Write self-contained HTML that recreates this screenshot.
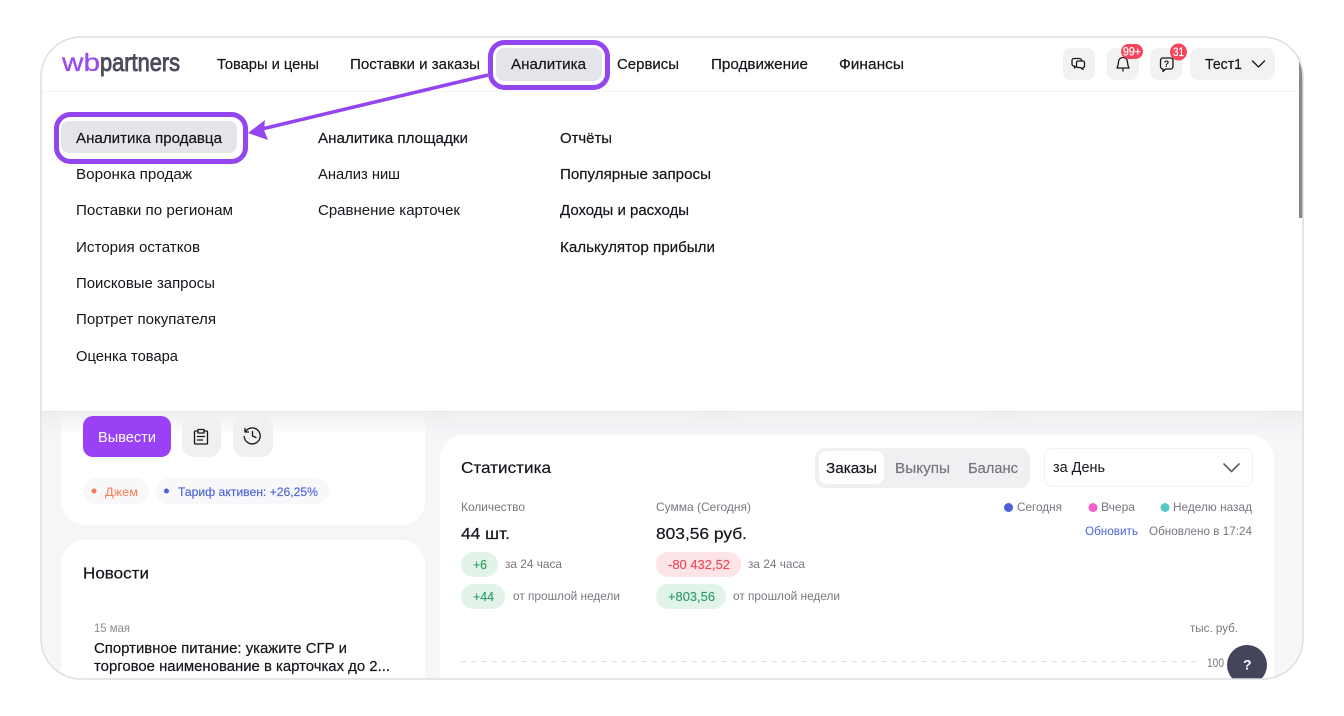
<!DOCTYPE html>
<html lang="ru"><head><meta charset="utf-8"><title>wbpartners</title>
<style>
html,body{margin:0;padding:0;background:#fff;width:1344px;height:716px;overflow:hidden}
svg{display:block}
text{font-family:"Liberation Sans",sans-serif;font-size:15px;fill:#15151c}
.m{stroke:#15151c;stroke-width:.2}
.g{fill:#77777f;font-size:12px}
.ic{fill:none;stroke:#15151c;stroke-width:1.3;stroke-linecap:round;stroke-linejoin:round}
</style></head><body>
<svg width="1344" height="716" viewBox="0 0 1344 716" xmlns="http://www.w3.org/2000/svg">
<defs>
<clipPath id="f"><rect x="41" y="37" width="1262" height="642" rx="40"/></clipPath>
<linearGradient id="sh" x1="0" y1="0" x2="0" y2="1"><stop offset="0" stop-color="#ededf0"/><stop offset="1" stop-color="#ededf0" stop-opacity="0"/></linearGradient>
</defs>
<g clip-path="url(#f)">
<rect x="41" y="37" width="1262" height="642" fill="#f6f6f9"/>
<rect x="61" y="380" width="364" height="145" rx="24" fill="#fff"/>
<rect x="61" y="540" width="364" height="200" rx="24" fill="#fff"/>
<rect x="442" y="380" width="264" height="40" rx="20" fill="#fff"/>
<rect x="728" y="380" width="264" height="40" rx="20" fill="#fff"/>
<rect x="1012" y="380" width="262" height="40" rx="20" fill="#fff"/>
<rect x="440" y="435" width="834" height="300" rx="24" fill="#fff"/>
<rect x="41" y="411" width="1262" height="24" fill="url(#sh)"/>
<rect x="41" y="37" width="1262" height="374" fill="#fff"/>
<rect x="41" y="411" width="1262" height="1" fill="#e8e8eb"/>
<rect x="41" y="91" width="1258" height="1" fill="#f3f3f5"/>
<rect x="1299" y="58" width="4" height="160" fill="#8a8a8d"/>

<!-- logo -->
<text x="62" y="71" textLength="38" lengthAdjust="spacingAndGlyphs" style="font-size:25px;fill:#9a4cf0;stroke:#9a4cf0;stroke-width:.3">wb</text>
<text x="100" y="71" textLength="80" lengthAdjust="spacingAndGlyphs" style="font-size:25px;fill:#4c4c5c;stroke:#4c4c5c;stroke-width:.9">partners</text>

<!-- nav -->
<rect x="496" y="48" width="106" height="33" rx="8" fill="#e4e5ea"/>
<text class="m" x="217" y="69" textLength="102" lengthAdjust="spacingAndGlyphs">Товары и цены</text>
<text class="m" x="350" y="69" textLength="130" lengthAdjust="spacingAndGlyphs">Поставки и заказы</text>
<text class="m" x="511" y="69" textLength="75" lengthAdjust="spacingAndGlyphs">Аналитика</text>
<text class="m" x="617" y="69" textLength="62" lengthAdjust="spacingAndGlyphs">Сервисы</text>
<text class="m" x="711" y="69" textLength="97" lengthAdjust="spacingAndGlyphs">Продвижение</text>
<text class="m" x="839" y="69" textLength="65" lengthAdjust="spacingAndGlyphs">Финансы</text>

<!-- top right -->
<rect x="1063" y="48" width="32" height="32" rx="8" fill="#f2f2f3"/>
<rect x="1107" y="48" width="32" height="32" rx="8" fill="#f2f2f3"/>
<rect x="1150" y="48" width="32" height="32" rx="8" fill="#f2f2f3"/>
<rect x="1190" y="48" width="85" height="32" rx="8" fill="#f2f2f3"/>
<path class="ic" d="M1081.500 61v-.5a2 2 0 0 0-2-2h-5.500a2 2 0 0 0-2 2v3.500a2 2 0 0 0 2 2h.5v2l2-1.800"/>
<path class="ic" d="M1078 61h5a1.500 1.500 0 0 1 1.500 1.500v3.500a1.500 1.500 0 0 1-1.500 1.500v2l-2.500-2h-2.500a1.500 1.500 0 0 1-1.500-1.500v-3.500a1.500 1.500 0 0 1 1.500-1.500z"/>
<path class="ic" d="M1118.500 62a4.500 4.500 0 0 1 9 0c.1 2.500.6 4.300 1.500 6h-12c.9-1.700 1.400-3.500 1.500-6zM1123 68.500v2.500"/>
<path class="ic" d="M1162 58h8.500a2.500 2.500 0 0 1 2.500 2.500v6a2.500 2.500 0 0 1-2.500 2.500h-5l-2.500 2.500v-2.500a2.500 2.500 0 0 1-2.500-2.500v-6a2.500 2.500 0 0 1 2.500-2.500z"/>
<text x="1163.800" y="67" style="font-size:9px;font-weight:bold">?</text>
<rect x="1121" y="44" width="22" height="15" rx="7.500" fill="#f5455c"/>
<text x="1123" y="55.500" textLength="18" lengthAdjust="spacingAndGlyphs" style="font-size:11.500px;fill:#fff;stroke:#fff;stroke-width:.2">99+</text>
<circle cx="1178.500" cy="52" r="8.500" fill="#f5455c"/>
<text x="1173" y="56" textLength="11" lengthAdjust="spacingAndGlyphs" style="font-size:11.500px;fill:#fff;stroke:#fff;stroke-width:.2">31</text>
<text class="m" x="1205" y="69" textLength="37" lengthAdjust="spacingAndGlyphs">Тест1</text>
<path class="ic" stroke-width="1.600" d="M1252.500 61l6 6 6-6"/>

<!-- dropdown -->
<rect x="61" y="121" width="176" height="32" rx="8" fill="#e4e5ea"/>
<text class="m" x="76" y="143" textLength="146" lengthAdjust="spacingAndGlyphs">Аналитика продавца</text>
<text x="76" y="179" textLength="116" lengthAdjust="spacingAndGlyphs">Воронка продаж</text>
<text x="76" y="215" textLength="157" lengthAdjust="spacingAndGlyphs">Поставки по регионам</text>
<text x="76" y="252" textLength="124" lengthAdjust="spacingAndGlyphs">История остатков</text>
<text x="76" y="288" textLength="139" lengthAdjust="spacingAndGlyphs">Поисковые запросы</text>
<text x="76" y="324" textLength="140" lengthAdjust="spacingAndGlyphs">Портрет покупателя</text>
<text x="76" y="361" textLength="102" lengthAdjust="spacingAndGlyphs">Оценка товара</text>
<text class="m" x="318" y="143" textLength="150" lengthAdjust="spacingAndGlyphs">Аналитика площадки</text>
<text x="318" y="179" textLength="82" lengthAdjust="spacingAndGlyphs">Анализ ниш</text>
<text x="318" y="215" textLength="142" lengthAdjust="spacingAndGlyphs">Сравнение карточек</text>
<text class="m" x="560" y="143" textLength="52" lengthAdjust="spacingAndGlyphs">Отчёты</text>
<text class="m" x="560" y="179" textLength="151" lengthAdjust="spacingAndGlyphs">Популярные запросы</text>
<text class="m" x="560" y="215" textLength="129" lengthAdjust="spacingAndGlyphs">Доходы и расходы</text>
<text class="m" x="560" y="252" textLength="155" lengthAdjust="spacingAndGlyphs">Калькулятор прибыли</text>

<!-- left card content -->
<rect x="83" y="416" width="88" height="41" rx="10" fill="#9a40f5"/>
<text x="98" y="442" textLength="58" lengthAdjust="spacingAndGlyphs" style="fill:#fff">Вывести</text>
<rect x="182" y="416" width="39" height="41" rx="12" fill="#f0f0f1"/>
<rect x="233" y="416" width="40" height="41" rx="12" fill="#f0f0f1"/>
<path class="ic" stroke-width="1.700" d="M198 431h-2.500a1 1 0 0 0-1 1v11a1 1 0 0 0 1 1h11a1 1 0 0 0 1-1v-11a1 1 0 0 0-1-1H204M198 429.500h6v3.500h-6zM197.500 436.500h7M197.500 440h5"/>
<path class="ic" stroke-width="1.700" d="M245.500 431.500a8 8 0 1 1-1.300 5M245 428.500v3.500h3.500M252.500 431.500v4.500l3.500 1.500"/>
<rect x="83" y="478" width="66" height="26" rx="13" fill="#f8f8fa"/>
<circle cx="94" cy="491" r="2.500" fill="#f47c4c"/>
<text x="105" y="496" textLength="33" lengthAdjust="spacingAndGlyphs" style="font-size:12px;fill:#f47c4c">Джем</text>
<rect x="156" y="478" width="173" height="26" rx="13" fill="#f8f8fa"/>
<circle cx="166.500" cy="491" r="2.500" fill="#4d63d8"/>
<text x="178" y="496" textLength="140" lengthAdjust="spacingAndGlyphs" style="font-size:12px;fill:#4d63d8;stroke:#4d63d8;stroke-width:.15">Тариф активен: +26,25%</text>
<text class="m" x="83" y="578.500" textLength="66" lengthAdjust="spacingAndGlyphs" style="font-size:16px">Новости</text>
<text x="94" y="632" textLength="36" lengthAdjust="spacingAndGlyphs" style="font-size:11.500px;fill:#8b8b92">15 мая</text>
<text class="m" x="94" y="653" textLength="253" lengthAdjust="spacingAndGlyphs">Спортивное питание: укажите СГР и</text>
<text class="m" x="94" y="671" textLength="296" lengthAdjust="spacingAndGlyphs">торговое наименование в карточках до 2...</text>

<!-- stats -->
<text class="m" x="461" y="473" textLength="90" lengthAdjust="spacingAndGlyphs" style="font-size:16px">Статистика</text>
<rect x="815" y="448" width="215" height="40" rx="10" fill="#f0f0f3"/>
<rect x="819" y="451" width="65" height="33" rx="8" fill="#fff"/>
<text class="m" x="826" y="473" textLength="51" lengthAdjust="spacingAndGlyphs">Заказы</text>
<text x="895" y="473" textLength="55" lengthAdjust="spacingAndGlyphs" style="fill:#77777f;stroke:#77777f;stroke-width:.2">Выкупы</text>
<text x="968" y="473" textLength="50" lengthAdjust="spacingAndGlyphs" style="fill:#77777f;stroke:#77777f;stroke-width:.2">Баланс</text>
<rect x="1044.500" y="448.500" width="208" height="38" rx="8" fill="#fff" stroke="#f0f0f2"/>
<text x="1053" y="472" textLength="52" lengthAdjust="spacingAndGlyphs">за День</text>
<path d="M1224 464l7.500 7.500 7.500-7.500" fill="none" stroke="#5f5f6a" stroke-width="1.600" stroke-linecap="round" stroke-linejoin="round"/>

<text class="g" x="461" y="511" textLength="64" lengthAdjust="spacingAndGlyphs">Количество</text>
<text class="g" x="656" y="511" textLength="95" lengthAdjust="spacingAndGlyphs">Сумма (Сегодня)</text>
<text class="m" x="461" y="539" textLength="49" lengthAdjust="spacingAndGlyphs" style="font-size:16px">44 шт.</text>
<text class="m" x="656" y="539" textLength="91" lengthAdjust="spacingAndGlyphs" style="font-size:16px">803,56 руб.</text>

<rect x="461" y="552" width="37" height="25" rx="12.500" fill="#e2f3ea"/>
<text x="473" y="569" textLength="14" lengthAdjust="spacingAndGlyphs" style="font-size:13px;fill:#2f9e64;stroke:#2f9e64;stroke-width:.15">+6</text>
<text class="g" x="505" y="568" textLength="57" lengthAdjust="spacingAndGlyphs">за 24 часа</text>
<rect x="461" y="584" width="44" height="25" rx="12.500" fill="#e2f3ea"/>
<text x="473" y="601" textLength="21" lengthAdjust="spacingAndGlyphs" style="font-size:13px;fill:#2f9e64;stroke:#2f9e64;stroke-width:.15">+44</text>
<text class="g" x="513" y="600" textLength="107" lengthAdjust="spacingAndGlyphs">от прошлой недели</text>
<rect x="656" y="552" width="85" height="25" rx="12.500" fill="#fde4e7"/>
<text x="668" y="569" textLength="62" lengthAdjust="spacingAndGlyphs" style="font-size:13px;fill:#f0475c;stroke:#f0475c;stroke-width:.15">-80 432,52</text>
<text class="g" x="748" y="568" textLength="57" lengthAdjust="spacingAndGlyphs">за 24 часа</text>
<rect x="656" y="584" width="70" height="25" rx="12.500" fill="#e2f3ea"/>
<text x="668" y="601" textLength="47" lengthAdjust="spacingAndGlyphs" style="font-size:13px;fill:#2f9e64;stroke:#2f9e64;stroke-width:.15">+803,56</text>
<text class="g" x="733" y="600" textLength="107" lengthAdjust="spacingAndGlyphs">от прошлой недели</text>

<circle cx="1008.500" cy="507.500" r="4.500" fill="#4d5fd8"/>
<text class="g" x="1017" y="511" textLength="45" lengthAdjust="spacingAndGlyphs">Сегодня</text>
<circle cx="1093" cy="507.500" r="4.500" fill="#f45fc8"/>
<text class="g" x="1101" y="511" textLength="34" lengthAdjust="spacingAndGlyphs">Вчера</text>
<circle cx="1165" cy="507.500" r="4.500" fill="#55c8c8"/>
<text class="g" x="1173" y="511" textLength="79" lengthAdjust="spacingAndGlyphs">Неделю назад</text>
<text x="1085" y="535" textLength="53" lengthAdjust="spacingAndGlyphs" style="font-size:12px;fill:#4d63d8">Обновить</text>
<text class="g" x="1149" y="535" textLength="103" lengthAdjust="spacingAndGlyphs">Обновлено в 17:24</text>
<text class="g" x="1190" y="632" textLength="48" lengthAdjust="spacingAndGlyphs">тыс. руб.</text>
<line x1="461" y1="661.500" x2="1198" y2="661.500" stroke="#e2e2e6" stroke-dasharray="6 4"/>
<text class="g" x="1207" y="667" textLength="17" lengthAdjust="spacingAndGlyphs">100</text>
<circle cx="1247" cy="665" r="20" fill="#44445a"/>
<text x="1243" y="669.500" style="font-size:14px;font-weight:bold;fill:#fff">?</text>
</g>
<rect x="41" y="37" width="1262" height="642" rx="40" fill="none" stroke="#dedee0" stroke-width="1.500"/>

<!-- annotation -->
<rect x="490.500" y="42.500" width="117" height="45" rx="14" fill="none" stroke="#9346f0" stroke-width="5"/>
<rect x="56.500" y="114.500" width="189" height="47" rx="14" fill="none" stroke="#9346f0" stroke-width="5"/>
<path d="M488 75L262 129" stroke="#9346f0" stroke-width="3.500" fill="none"/>
<path d="M248 133L265 120L264 130L268 140Z" fill="#9346f0"/>
</svg>
</body></html>
